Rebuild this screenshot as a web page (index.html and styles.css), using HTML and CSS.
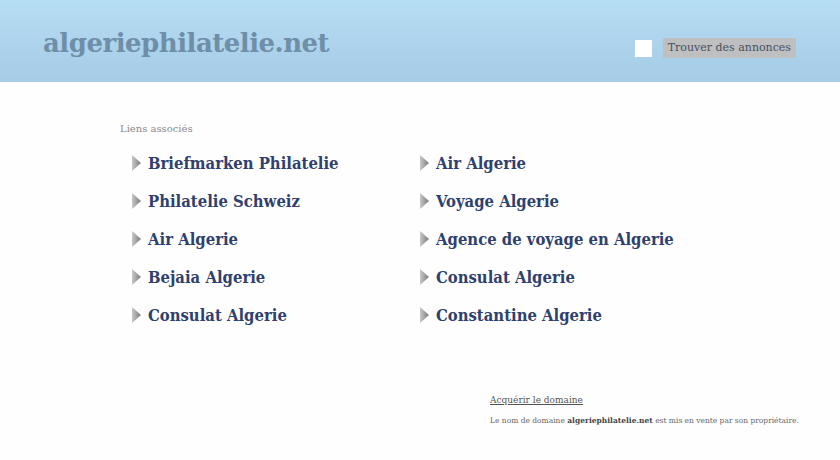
FILE: index.html
```html
<!DOCTYPE html>
<html lang="fr">
<head>
<meta charset="utf-8">
<title>algeriephilatelie.net</title>
<link rel="stylesheet" href="styles.css">
</head>
<body>
<header class="header">
  <h1 class="logo">algeriephilatelie.net</h1>
  <div class="search">
    <span class="box"></span>
    <span class="btn">Trouver des annonces</span>
  </div>
</header>
<main class="main">
  <div class="label">Liens associés</div>
  <div class="links">
    <a class="link" href="#"><span class="arrow"></span>Briefmarken Philatelie</a>
    <a class="link" href="#"><span class="arrow"></span>Air Algerie</a>
    <a class="link" href="#"><span class="arrow"></span>Philatelie Schweiz</a>
    <a class="link" href="#"><span class="arrow"></span>Voyage Algerie</a>
    <a class="link" href="#"><span class="arrow"></span>Air Algerie</a>
    <a class="link" href="#"><span class="arrow"></span>Agence de voyage en Algerie</a>
    <a class="link" href="#"><span class="arrow"></span>Bejaia Algerie</a>
    <a class="link" href="#"><span class="arrow"></span>Consulat Algerie</a>
    <a class="link" href="#"><span class="arrow"></span>Consulat Algerie</a>
    <a class="link" href="#"><span class="arrow"></span>Constantine Algerie</a>
  </div>
  <div class="footer">
    <a class="buy" href="#">Acquérir le domaine</a>
    <p class="note">Le nom de domaine <b>algeriephilatelie.net</b> est mis en vente par son propriétaire.</p>
  </div>
</main>
</body>
</html>
```
FILE: styles.css
```css
html, body {
  margin: 0;
  padding: 0;
}
body {
  background: #fefefe;
  font-family: "DejaVu Serif", "Liberation Serif", serif;
  width: 840px;
  height: 460px;
  overflow: hidden;
}
.header {
  height: 82px;
  background: linear-gradient(#b5ddf3, #a6cce6);
  display: flex;
  align-items: flex-start;
  justify-content: space-between;
  padding: 0 44px 0 43px;
  box-sizing: border-box;
}
.logo {
  margin: 25px 0 0 0;
  font-size: 26px;
  font-weight: bold;
  color: #6f8ea7;
  letter-spacing: -0.5px;
  line-height: 36px;
}
.search {
  display: flex;
  align-items: center;
  margin-top: 38px;
}
.box {
  width: 17px;
  height: 17px;
  background: #fff;
  margin-right: 11px;
}
.btn {
  background: #bdbfc1;
  color: #48505e;
  font-size: 11px;
  padding: 2px 5px;
  line-height: 16px;
}
.main {
  padding: 40px 0 0 120px;
}
.label {
  font-size: 10px;
  color: #8a8a8a;
  line-height: 14px;
}
.links {
  display: grid;
  grid-template-columns: 288px 300px;
  grid-auto-rows: 38px;
  margin: 14px 0 0 12px;
}
.link {
  display: flex;
  align-items: center;
  color: #2f406f;
  text-decoration: none;
  font-family: "DejaVu Serif Condensed", "DejaVu Serif", serif;
  font-stretch: condensed;
  font-weight: bold;
  font-size: 16.5px;
  height: 26px;
}
.arrow {
  width: 9px;
  height: 16px;
  margin-right: 7px;
  background: linear-gradient(90deg, #c8c8c8, #7a7a7a);
  clip-path: polygon(0 0, 100% 50%, 0 100%);
}
.footer {
  margin: 48px 0 0 370px;
}
.buy {
  font-size: 9px;
  color: #555;
  text-decoration: underline;
}
.note {
  margin: 9px 0 0 0;
  font-size: 7.5px;
  color: #666;
}
.note b {
  color: #444;
}
```
